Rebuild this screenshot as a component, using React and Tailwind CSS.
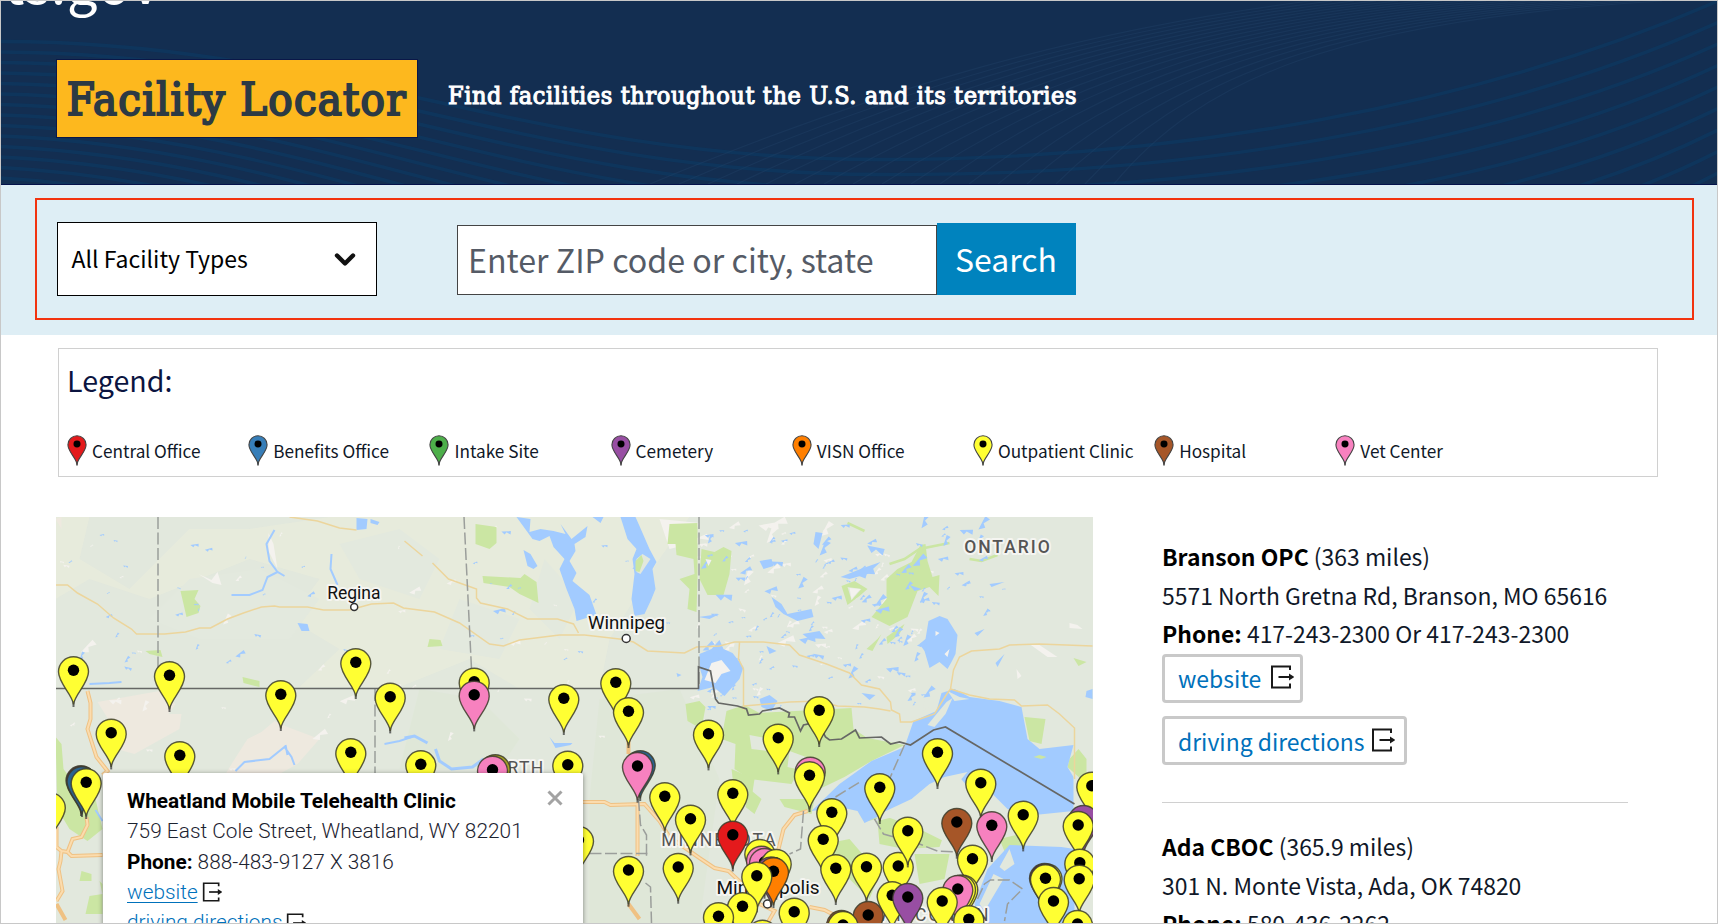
import React from "react";

const YELLOW = "#ffff33";
const PINK = "#f781bf";
const BLUE = "#377eb8";
const PURPLE = "#984ea3";
const BROWN = "#a65628";
const ORANGE = "#ff7f00";
const RED = "#e41a1c";
const GREEN = "#4daf4a";

const LEGEND = [
  ["Central Office", RED],
  ["Benefits Office", BLUE],
  ["Intake Site", GREEN],
  ["Cemetery", PURPLE],
  ["VISN Office", ORANGE],
  ["Outpatient Clinic", YELLOW],
  ["Hospital", BROWN],
  ["Vet Center", PINK],
];

// [centre x, top y, colour] in page coordinates, painted in this order
const PINS = [
  [74, 657.3, YELLOW], [170, 662.3, YELLOW], [281.3, 681.3, YELLOW], [356.3, 649.3, YELLOW],
  [390.7, 683.7, YELLOW], [111.7, 719.7, YELLOW], [180.3, 742.3, YELLOW], [351.3, 739.3, YELLOW],
  [421.3, 751.3, YELLOW], [50.8, 793.5, YELLOW], [81.5, 766.3, "#5a2a50"], [82.5, 767.3, "#2b628f"], [86.7, 769.3, YELLOW],
  [474.7, 668.7, YELLOW], [474.7, 681.7, PINK], [564.3, 685.3, YELLOW], [616.3, 669.3, YELLOW],
  [629, 698.3, YELLOW], [709, 720.7, YELLOW], [495.7, 755.3, "#a5a025"], [493, 756.7, PINK],
  [568.3, 751.7, YELLOW], [640.7, 751.3, "#2b628f"], [638, 753, PINK], [665.3, 783.3, YELLOW],
  [691, 805.7, YELLOW], [733.3, 780.3, YELLOW], [733.3, 821.7, RED], [579, 827, YELLOW],
  [629, 857, YELLOW], [678.7, 854, YELLOW], [819.7, 697.3, YELLOW], [778.7, 724.7, YELLOW],
  [810.7, 757.7, PINK], [810, 762.3, YELLOW], [938, 739.3, YELLOW], [880.3, 774.3, YELLOW],
  [981.3, 769.7, YELLOW], [1023.7, 801.7, YELLOW], [832.3, 799.3, YELLOW], [823.7, 826.3, YELLOW],
  [898.7, 853, YELLOW], [867, 853.7, YELLOW], [836.3, 855.3, YELLOW], [908.3, 817.7, YELLOW],
  [957.3, 809, BROWN], [992.3, 812.3, PINK], [1092.3, 772.7, YELLOW], [1084, 806, PURPLE],
  [1078.7, 812, YELLOW], [760.3, 840, YELLOW], [762, 846.7, PINK], [765, 849, PINK],
  [776.7, 850, YELLOW], [771.5, 857.5, PURPLE], [774, 858.3, ORANGE], [757.3, 862.7, YELLOW],
  [743, 893.3, YELLOW], [719, 903.3, YELLOW], [763, 920.7, YELLOW], [794.7, 898.7, YELLOW],
  [973, 845.7, YELLOW], [963.3, 875.7, YELLOW], [961, 875.7, YELLOW], [958.3, 876, PINK],
  [942.7, 888, YELLOW], [969.3, 906.3, YELLOW], [892.7, 882.3, YELLOW], [908.3, 884, PURPLE],
  [868.7, 902, BROWN], [842, 911, BROWN], [843.5, 912, YELLOW], [1080.3, 849.7, YELLOW],
  [1079.7, 865.7, YELLOW], [1047.5, 864.5, YELLOW], [1045, 864, "#5a2a50"], [1046, 865.3, YELLOW],
  [1054, 888, YELLOW], [1078, 911, YELLOW],
];

const PIN_PATH = "M0 48C-.9 38-15 27-15 15.3A15 15 0 0 1 15 15.3C15 27 .9 38 0 48Z";

// Small repeatable generator for scattered lakes and clearings
function scatter(seed, count, x0, y0, w, h, size) {
  let s = seed;
  const rnd = () => {
    s = (s * 16807) % 2147483647;
    return s / 2147483647;
  };
  let d = "";
  for (let i = 0; i < count; i++) {
    const x = x0 + rnd() * w;
    const y = y0 + rnd() * h;
    const k = size * (0.4 + rnd() * rnd() * 1.6);
    const t = (rnd() - 0.35) * 1.6;
    const p = (a, r) => `${(k * r * Math.cos(a + t)).toFixed(1)} ${(-k * r * Math.sin(a + t)).toFixed(1)}`;
    d += `M${x.toFixed(1)} ${y.toFixed(1)}l${p(0.3, 0.8)}l${p(-1.4, 0.3)}l${p(2.9, 0.4)}l${p(-2, 0.25)}Z`;
  }
  return d;
}

function HeaderWaves() {
  const lines = Array.from({ length: 17 }, (_, i) => i);
  return (
    <svg className="absolute inset-0" width="1716" height="183" viewBox="1 1 1716 183" fill="none">
      <g stroke="#0d3962" strokeWidth="3.4" opacity=".7">
        {lines.map((i) => (
          <path key={i} d={`M0 ${41.5 + i * 10.5}C330 ${41 + i * 12} 520 ${159 + i * 14.5} 880 ${159.5 + i * 15}C1180 ${160 + i * 17} 1480 ${105 + i * 24} 1718 ${1 + i * 21.5}`} />
        ))}
      </g>
      <g stroke="#24456b" strokeWidth="1.2" opacity=".35">
        {lines.map((i) => (
          <path key={i} d={`M${650 + i * 29} 184C${880 + i * 20} ${88 - i * 0.5} ${1080 + i * 16} ${30 - i * 0.6} ${1310 + i * 22} 1`} />
        ))}
      </g>
    </svg>
  );
}

function ExitIcon({ size, className = "" }) {
  return (
    <svg width={size} height={size} viewBox="0 0 24 24" fill="none" stroke="#191919" strokeWidth="2" className={className}>
      <path d="M20 5V1.5H2V22.5H20V18.5" />
      <path d="M8.5 12H20" />
      <path d="M19 8.5L24.5 12L19 15.5Z" fill="#191919" stroke="none" />
    </svg>
  );
}

function MapArt() {
  const halo = { paintOrder: "stroke", stroke: "#f5f5f1", strokeWidth: 4, strokeLinejoin: "round" };
  return (
    <svg className="block" width="1037" height="406" viewBox="56.5 518 1037 406" style={{ fontFamily: "Roboto, sans-serif" }}>
      <rect x="56" y="518" width="1038" height="406" fill="#e2e8dd" />
      {/* prairie tones */}
      <path fill="#e8ebdc" opacity=".85" d="M56 518H90L80 560L130 590L160 560L190 530H250L330 518H690L660 560L610 640L600 690H520L470 660L400 688H300L340 650L290 620L320 580L250 560L150 600L90 580L56 600Z" />
      <path fill="#e3e9de" d="M190 580L260 570L320 600L290 640L200 640L150 620ZM340 545L400 530L440 560L420 600L360 580ZM460 600L520 620L500 660L440 650ZM545 560L580 600L560 640L530 610Z" />
      <path fill="#eee9df" d="M98 703L160 692L176 705L169 715H182L180 730L135 755L106 747L118 735ZM248 740L262 733L275 722L288 728L320 740L298 765L280 775H226L232 765ZM56 520L62 518V530Z" />
      <path fill="#dfe7d8" d="M420 690L480 700L520 740L500 770H400ZM600 700L680 690L720 780L700 924H590V800Z" />
      <path fill="#f4f2ee" d={scatter(77, 42, 60, 530, 590, 250, 11)} />
      <path fill="#f4f2ee" d={scatter(913, 70, 690, 525, 240, 175, 15)} />
      <path fill="#f4f2ee" d="M1070 624L1078 626L1083 630L1070 629ZM1030 645L1040 646L1058 658L1048 658ZM1017 670L1022 677L1018 680Z" />
      <path fill="#f4f2ee" d="M199 575L212 581L218 573L222 586L213 584ZM269 534V552L278 570L274 545ZM660 520L700 524L690 545L670 550Z" />

      {/* parks */}
      <g fill="#cbe6a3">
        <path d="M181 592L199 591L195 600L201 607L199 614L187 618ZM146 652L161 651L163 658L150 655ZM243 678L260 682V688L244 684Z" />
        <path d="M476 525L497 528L497 544L490 550L476 545ZM483 577L521 579L525 575L537 583L539 604L520 595L510 588L484 584ZM430 640L441 641L443 647L428 648Z" />
        <path d="M670 525L698 524L698 580L697 613L688 610L690 590L680 580L695 575L694 560L677 556L676 545L668 545Z" />
        <path d="M702 550L715 553L724 548L732 552L730 575L724 596L708 596L700 580Z" />
        <path d="M686 705L700 702L706 708L702 730L688 722ZM727 712L745 706L760 714L852 709L854 730L868 739L905 746L872 762L845 778L820 790L800 770L792 785L750 780L735 770L736 745L722 740Z" />
        <path d="M732 770L755 780L752 800L735 795Z" />
        <path d="M921 546L926 545L928 562L933 578L940 576L939 597L930 588L918 592L908 618L890 627L872 618L887 600V580L898 570L912 563Z" />
        <path fillRule="evenodd" d="M842 587L855 582L868 590L860 597L848 606ZM848 588L862 590L852 601Z" />
        <path d="M887 638L905 625L900 635L888 645ZM867 650L878 640L882 635L873 652Z" />
        <path d="M1025 718L1046 720L1042 745L1030 742ZM1070 760L1079 750L1087 760V785L1068 768ZM1074 659L1087 663L1079 667Z" />
        <path d="M878 822L925 810L950 820L940 848L905 850L880 845ZM820 846L850 840L880 875L870 900L835 865ZM915 855L950 855L945 880L920 885ZM1000 840L1020 835L1028 850L1008 860Z" />
        <path d="M780 800L815 800L812 815L785 808ZM750 790L762 800L755 815L746 808ZM860 812L870 808L878 820L868 822Z" />
        <path d="M56 738L62 745L64 770L75 785L96 800L103 830L88 842L70 830L58 810ZM82 872L92 875L92 882L80 882ZM90 897L103 895V915H86ZM100 882L103 885V895Z" />
      </g>
      <path fill="#e2e8dd" d="M750 736L772 740L768 752L752 750ZM790 752L812 760L806 772L788 768Z" />
      <path fill="none" stroke="#cbe6a3" strokeWidth="2.5" d="M848 524L865 532M890 565L905 560L920 550L950 544M970 560L982 562L998 556" />

      {/* lakes */}
      <g fill="#a2cbff">
        <path d="M357 519L368 520L367 530L357 531ZM371 520L380 523L378 526L371 524ZM298 624L308 625L310 632L302 632Z" />
        <path d="M517 518L531 520L530 533L541 530L554 532L566 535L561 525L572 540L588 527L586 538L575 545L576 552L570 562L577 574L573 582L590 596L597 616L577 622L575 610L567 590L560 570L565 560L554 548L550 537L540 542L533 540Z" />
        <path d="M524 551L531 555L538 567L534 570L528 567ZM593 518L604 518L601 524Z" />
        <path d="M621 518H636L640 527L650 550L657 563L653 570L656 590L652 600L645 615L635 617L632 600L635 575L633 560L637 550L628 540Z" />
        <path d="M700 655L712 650L720 641L724 650L733 654L744 668L740 680L725 697L714 688L698 692L703 678L700 668Z" />
        <path d="M929 622L940 617L948 620L958 636L956 655L952 663L948 670L940 663L930 669L925 652L920 645L926 640Z" />
        <path d="M942 694L955 690L970 698L1000 702L1022 708L1028 740L1040 750L1074 746L1068 768L1074 778V812L1035 816L1008 810L990 792L970 790L960 778L948 780L930 790L918 805L890 812L865 824L858 812L840 808L812 812L840 785L872 762L905 748L914 722L937 712Z" />
        <path d="M988 870L1010 846L1062 848L1075 850V924H980L975 905Z" />
        <path d="M841 578L861 570L881 563L868 575L850 580ZM772 598L782 605L788 615L812 610L814 618L798 622L784 615L776 608ZM760 562L772 560L774 567L764 570Z" />
        <path d="M760 700L770 696L778 702L772 712L762 708ZM862 694L876 696L870 701ZM767 647L777 652L770 655ZM816 533L823 534L819 550L814 545ZM910 586L922 590L915 592ZM803 635L820 632L826 640L808 639Z" />
        <path d="M550 738L555 744L573 744L571 746L556 749ZM699 618L720 615L710 620ZM677 674L682 676L678 678Z" />
      </g>
      <path fill="#a2cbff" d={scatter(4211, 120, 700, 525, 225, 185, 12)} />
      <path fill="#a2cbff" d={scatter(333, 20, 920, 530, 90, 90, 11)} />
      <path fill="#a2cbff" d={scatter(8651, 30, 60, 530, 300, 140, 8)} />
      <path fill="#a2cbff" d={scatter(51, 20, 470, 530, 220, 150, 8)} />
      <path fill="#a2cbff" d="M1005 655L998 668L996 664ZM1087 692L1093 690V700L1086 698ZM990 585L1005 583L992 588ZM985 630L978 637L975 634Z" />
      <path fill="#e2e8dd" d="M947 703L953 699L946 715L935 728L928 726ZM948 692L960 698L970 700L955 702ZM637 560L643 555L651 560L641 575L637 573ZM925 700L929 708L923 712Z" />
      <path fill="#cbe6a3" d="M1034 758L1040 756L1047 758L1042 760ZM636 562L642 556L644 562L640 573L636 572Z" />
      <path fill="#e2e8dd" d="M880 815L912 800L930 785L945 778L968 773L955 788L950 805L970 820L960 850L920 830ZM994 875L1004 880L985 912L980 905ZM1010 850L1015 865L1005 872L1000 868Z" />
      <path fill="#f4f2ee" d="M712 664L722 661L731 672L722 675L716 684L705 681ZM936 632L940 634L936 637ZM945 655L950 650L948 658ZM706 560L712 561L709 567ZM850 589L861 590L852 600Z" />
      <g fill="none" stroke="#a2cbff" strokeWidth="2">
        <path d="M232 596L250 596L263 591L268 578L278 573L285 577M275 531L267 545L270 562L278 573M332 555L331 570L338 586M236 772L245 763L270 760L285 748L292 758L295 766M286 746L288 756" />
        <path d="M405 739L415 737L428 744M436 750L440 762L452 770L473 768L484 760" strokeWidth="3" />
        <path d="M90 685L110 684L122 683M96 811L103 822M385 745L400 742L412 738" />
      </g>

      {/* roads */}
      <g fill="none" stroke="#ecd59c" strokeWidth="1.5">
        <path d="M56 586H68L78 594L98 605L114 619L132 630L137 635H165L186 633L200 629H211L228 620L244 614L262 608L275 607L280 608H308L324 611H350L372 605L394 604L404 609L435 613L460 624L490 645L504 647L520 641L560 636H585L620 640L634 643L648 652L685 654L697 648L720 647L735 643L764 643L790 646L800 656L827 665L850 674L862 686L880 690L891 703L892 711L900 715L901 723H912L935 715L946 697L951 690L954 671L960 658L972 652L1000 650L1010 646L1040 645L1093 647" />
        <path d="M290 518L318 522L340 529L357 531M405 542L423 557M433 564L449 580L477 590V599L481 604L508 610L528 620H558L574 625L579 634M740 643L739 660L744 670V711M744 707L790 703L820 702L838 707L865 708L880 710L891 712M951 690L970 696L990 700L1015 701L1022 707L1048 706L1060 715L1075 729V780" />
      </g>
      <g fill="none" stroke="#efc183" strokeWidth="4">
        <path d="M88 692L91 704V720L88 730L97 758L108 772L103 776M87 818L88 826L82 838L73 840L68 853L62 852L57 848V828M68 853L72 857L103 856M62 852L61 862L59 870L63 892L57 902M57 905L66 921M583 803H605L611 806L645 805L660 822L670 838L700 859L715 869L729 872L743 885M638 805V857M629 738L629 755M629 905L640 920M779 850L784 830L795 816L808 812M810 908L825 911L850 924M760 905L775 912L768 924" />
      </g>
      <g fill="none" stroke="#fbdcae" strokeWidth="2">
        <path d="M88 692L91 704V720L88 730L97 758L108 772L103 776M87 818L88 826L82 838L73 840L68 853L62 852L57 848V828M68 853L72 857L103 856M62 852L61 862L59 870L63 892L57 902M583 803H605L611 806L645 805L660 822L670 838L700 859L715 869L729 872L743 885M638 805V857M779 850L784 830L795 816L808 812M810 908L825 911L850 924M760 905L775 912L768 924" />
      </g>

      {/* borders */}
      <g fill="none" stroke="#9b9e9b" strokeWidth="1.5" strokeDasharray="12 3.5">
        <path d="M158.5 518V690M464.5 518L472 670M699.5 518V688M375.5 690V775M590 854.5H648M639 800L641 826L647 836V860M646 884L651 888L652 924" />
        <path d="M836 798L862 782M905 746L890 780M804 812L801 850L790 855M875 820L884 835L920 845L938 852L958 853M978 900L985 885L991 881H1010L1023 890L1008 905L1005 922" />
      </g>
      <path fill="none" stroke="#666765" strokeWidth="1.7" d="M56 689.5H699V668L711 672L716 700L719 704L738 707L747 710L749 716L760 715L763 712L780 709L790 714L789 718H795L798 725L801 732L804 726L818 723L826 738L830 741L842 740L856 731L860 739L882 738L891 745L900 743L911 746L934 731L946 728L1075 805" />

      {/* place names */}
      <g fill="#111" textAnchor="middle" style={halo}>
        <text x="354.3" y="600" fontSize="17.5">Regina</text>
        <text x="627" y="630" fontSize="18.7">Winnipeg</text>
        <text x="768.5" y="895" fontSize="19">Minneapolis</text>
      </g>
      <g fill="#555" textAnchor="middle" style={halo} fontSize="17.5" letterSpacing="2">
        <text x="1008.5" y="554" fontWeight="500">ONTARIO</text>
        <text x="526.5" y="774.5" letterSpacing="1.4">RTH</text>
        <text x="720" y="847">MINNESOTA</text>
        <text x="935" y="922">WISCONSIN</text>
      </g>
      <g fill="#fff" stroke="#333" strokeWidth="1.5">
        <circle cx="354.7" cy="608" r="3.5" />
        <circle cx="626.7" cy="639.5" r="4" />
        <circle cx="768" cy="905" r="4" />
      </g>

      {/* facilities */}
      {PINS.map(([x, y, color], i) => (
        <g key={i} transform={`translate(${x} ${y + 0.2})`}>
          <path d="M0 40V50.5" stroke="#333" strokeOpacity=".7" strokeWidth="2" />
          <path d={PIN_PATH} fill={color} stroke="#3d3d2c" strokeWidth="1.4" strokeOpacity=".85" />
          <circle cx="0" cy="13.8" r="5.7" fill="#000" />
        </g>
      ))}
    </svg>
  );
}

function InfoWindow() {
  return (
    <div className="absolute left-[47px] top-[255.7px] h-[170px] w-[479.5px] rounded-[2px] bg-white pl-[24px] pt-[13px] font-[Roboto,sans-serif] text-[20.8px] font-light leading-[30.4px] text-[#1c2330] shadow-[0_1px_5px_rgba(0,0,0,0.45)]">
      <div className="font-bold text-black">Wheatland Mobile Telehealth Clinic</div>
      <div className="tracking-[0.04px]">759 East Cole Street, Wheatland, WY 82201</div>
      <div><span className="font-bold text-black">Phone:</span> 888-483-9127 X 3816</div>
      <div className="flex items-center gap-[4px] text-[#0071bb]">
        <span className="underline decoration-1 underline-offset-[3px]">website</span>
        <ExitIcon size={20} />
      </div>
      <div className="flex items-center gap-[4px] text-[#0071bb]">
        <span className="underline decoration-1 underline-offset-[3px]">driving directions</span>
        <ExitIcon size={20} />
      </div>
      <svg className="absolute right-[20px] top-[17px]" width="16" height="16" viewBox="0 0 16 16" stroke="#a3a3a3" strokeWidth="3">
        <path d="M1.5 1.5L14.5 14.5M14.5 1.5L1.5 14.5" />
      </svg>
    </div>
  );
}

function LinkButton({ label, className }) {
  return (
    <div className={`flex h-[49px] items-center rounded-[4px] border-[3px] border-[#c9c9c9] pl-[13px] text-[#0071bb] ${className}`}>
      <span className="leading-[34px]">{label}</span>
      <ExitIcon size={24} className="mb-[2px]" />
    </div>
  );
}

export default function App() {
  return (
    <div className="flex h-[924px] w-[1718px] flex-col overflow-hidden border border-[#c8c8c8] bg-white font-['Noto_Sans_CJK_JP',sans-serif] text-[#101828]">
      <header className="relative h-[184px] shrink-0 overflow-hidden border-b border-[#04124a] bg-[#132e51]">
        <HeaderWaves />
        <div className="absolute left-[3px] -top-[55px] whitespace-nowrap text-[54px] leading-[70px] tracking-[1px] text-white">ts.gov</div>
        <div className="relative flex pl-[55.5px] pt-[59px]">
          <h1 className="flex h-[77px] w-[360.5px] items-center justify-center whitespace-nowrap bg-[#fdb81e] pt-[2px] font-['DejaVu_Serif_Condensed','DejaVu_Serif',serif] text-[45px] leading-[60px] tracking-[1.2px] text-[#2c3a44] outline outline-1 outline-[#0a1748] [-webkit-text-stroke:2px_#2c3a44]">
            Facility Locator
          </h1>
          <p className="ml-[31px] mt-[16px] whitespace-nowrap font-['DejaVu_Serif_Condensed','DejaVu_Serif',serif] text-[25px] leading-[40px] tracking-[0.61px] text-white [-webkit-text-stroke:1.1px_white]">
            Find facilities throughout the U.S. and its territories
          </p>
        </div>
      </header>

      <section className="h-[150px] shrink-0 bg-[#deeef5] pl-[34px] pt-[13px]">
        <div className="flex h-[122px] w-[1659px] border-2 border-[#f2330f] pl-[19.5px] pt-[21px]">
          <div className="mt-px flex h-[74px] w-[320px] items-center justify-between border border-black bg-white pb-[2px] pl-[14px] pr-[20px] text-[23px] leading-[34px] text-black">
            All Facility Types
            <svg className="mt-[3px]" width="22" height="16" viewBox="0 0 22 16" fill="none" stroke="#111" strokeWidth="4.4" strokeLinecap="round" strokeLinejoin="round">
              <path d="M3 3.5L11 11.5L19 3.5" />
            </svg>
          </div>
          <div className="ml-[80px] mt-[4px] flex h-[70px] w-[480px] items-center border border-[#444] bg-white pb-[2px] pl-[10.5px] text-[32.2px] leading-[48px] text-[#555b66]">
            Enter ZIP code or city, state
          </div>
          <div className="mt-[2px] flex h-[72px] w-[139px] items-center justify-center bg-[#0083be] pb-[2px] text-[31.9px] leading-[48px] text-white">
            Search
          </div>
        </div>
      </section>

      <section className="ml-[57px] mt-[13px] h-[129px] w-[1600px] shrink-0 border-[1.5px] border-[#d0d0d0] pl-[8px]">
        <h2 className="mt-[10px] text-[28.6px] leading-[42px] text-[#0b1440]">Legend:</h2>
        <ul className="mt-[34px] flex">
          {LEGEND.map(([name, color]) => (
            <li key={name} className="flex w-[181.2px] items-center gap-[5px] whitespace-nowrap text-[17.2px] leading-[31px]">
              <svg width="20" height="31" viewBox="-16.5 -1 33 52" preserveAspectRatio="none">
                <path d="M0 40V50" stroke="#333" strokeWidth="2.4" />
                <path d={PIN_PATH} fill={color} stroke="#444" strokeWidth="1.8" />
                <circle cx="0" cy="14" r="5.8" fill="#000" />
              </svg>
              {name}
            </li>
          ))}
        </ul>
      </section>

      <main className="mt-[40px] flex pl-[55px]">
        <div className="relative h-[406px] w-[1037px] shrink-0 overflow-hidden">
          <MapArt />
          <InfoWindow />
        </div>
        <aside className="ml-[69px] w-[466px] pt-[20px] text-[22.93px] leading-[38.5px]">
          <div><b className="text-black">Branson OPC</b> (363 miles)</div>
          <div>5571 North Gretna Rd, Branson, MO 65616</div>
          <div><b className="text-black">Phone:</b> 417-243-2300 Or 417-243-2300</div>
          <LinkButton label="website" className="mt-px w-[141px] gap-[9px]" />
          <LinkButton label="driving directions" className="mt-[13.5px] w-[245px] gap-[6px]" />
          <div className="mt-[36.5px] h-px bg-[#d0d0d0]" />
          <div className="mt-[24.5px]"><b className="text-black">Ada CBOC</b> (365.9 miles)</div>
          <div>301 N. Monte Vista, Ada, OK 74820</div>
          <div><b className="text-black">Phone:</b> 580-436-2262</div>
        </aside>
      </main>
    </div>
  );
}
